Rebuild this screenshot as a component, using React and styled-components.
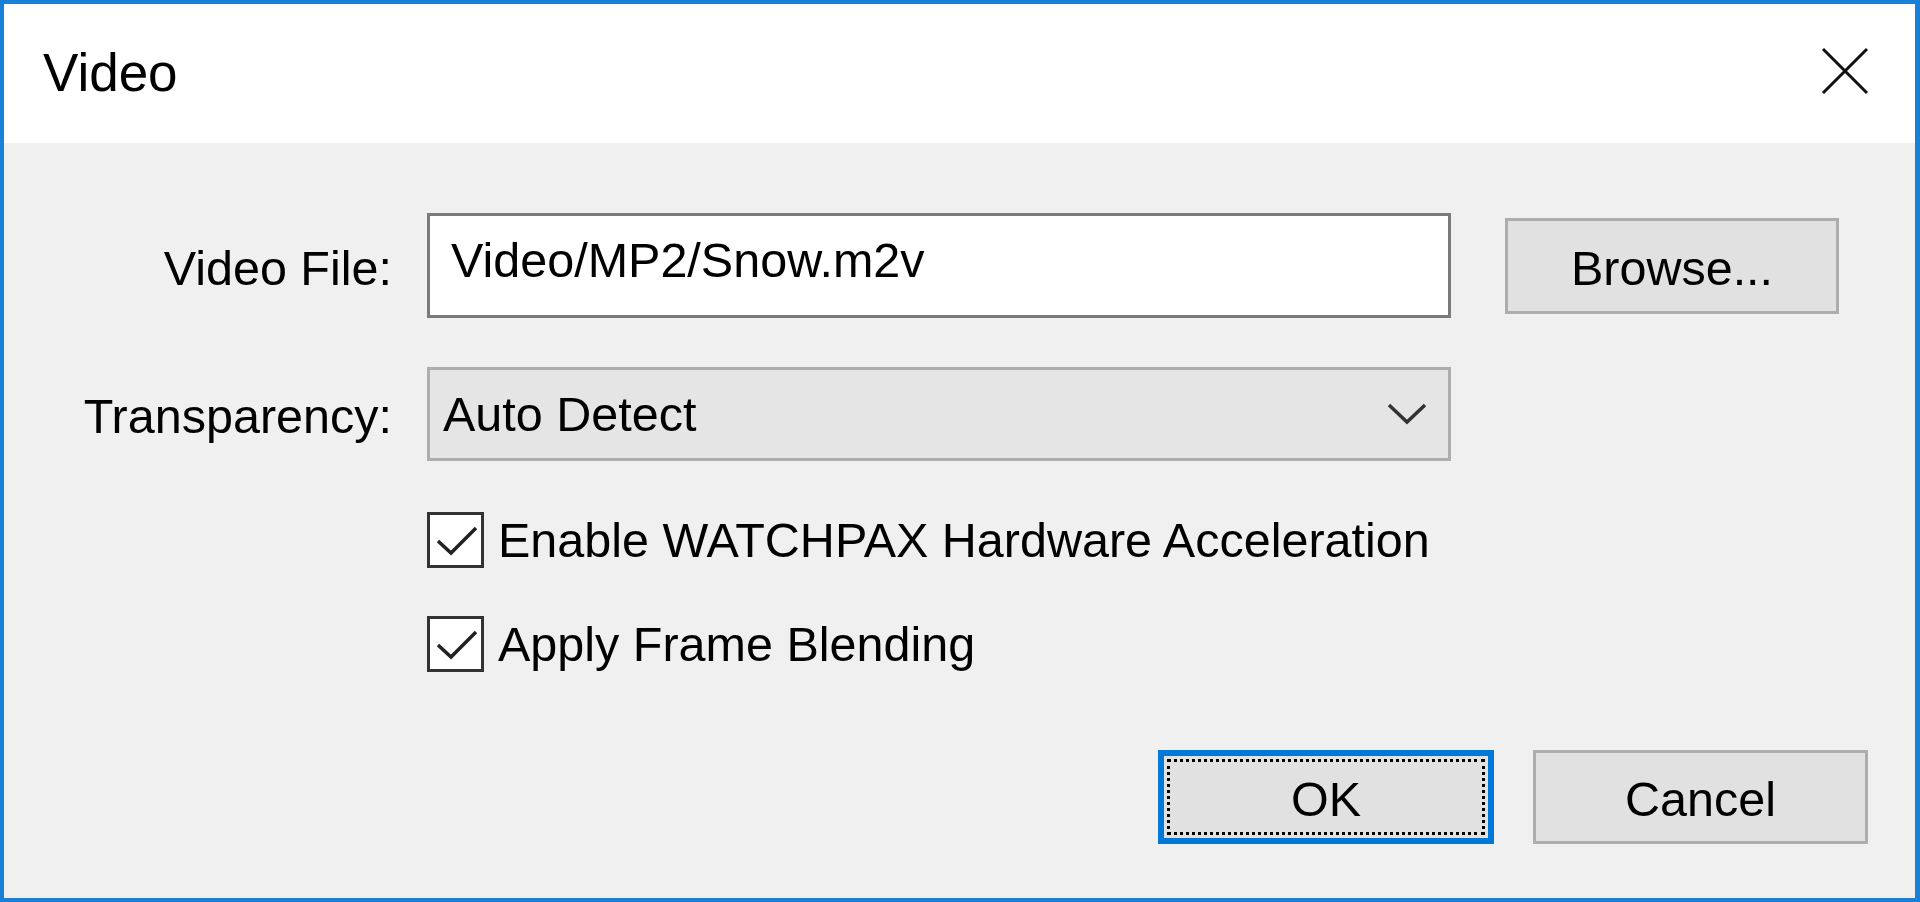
import React, { useState } from "react";
import styled, { createGlobalStyle } from "styled-components";

const GlobalStyle = createGlobalStyle`
  html, body {
    margin: 0;
    padding: 0;
    background: #f0f0f0;
  }
  body {
    font-family: "Liberation Sans", Arial, sans-serif;
    color: #000;
  }
`;

// the dialog fills the whole viewport
const Window = styled.div`
  box-sizing: border-box;
  width: 1920px;
  height: 902px;
  border: 4px solid #1a7fd6;
  border-right-width: 5px;
  display: flex;
  flex-direction: column;
  background: #f0f0f0;
`;

const TitleBar = styled.div`
  height: 139px;
  background: #fff;
  display: flex;
  align-items: center;
  justify-content: space-between;
  padding: 0 45px 0 39px;
  flex-shrink: 0;
`;

const Title = styled.div`
  font-size: 53px;
  padding-bottom: 2px;
`;

const CloseBtn = styled.button`
  width: 50px;
  height: 50px;
  border: none;
  background: transparent;
  padding: 0;
  margin-bottom: 6px;
  cursor: pointer;
  display: flex;
  align-items: center;
  justify-content: center;
`;

const Body = styled.div`
  flex: 1;
  display: flex;
  flex-direction: column;
  padding-top: 70px;
`;

const Row = styled.div`
  display: grid;
  grid-template-columns: 388px 1024px 334px;
  column-gap: 35px;
  align-items: center;
  margin-bottom: ${(p) => p.$gap || 0}px;
`;

const Label = styled.label`
  text-align: right;
  font-size: 48.5px;
  white-space: nowrap;
  padding-top: 4px;
`;

const TextField = styled.input`
  box-sizing: border-box;
  height: 105px;
  width: 100%;
  border: 3px solid #7a7a7a;
  background: #fff;
  padding: 0 0 12px 21px;
  font-family: inherit;
  font-size: 48.5px;
  color: #000;
  outline: none;
`;

const Button = styled.button`
  box-sizing: border-box;
  width: ${(p) => p.$width || 335}px;
  height: ${(p) => p.$height || 94}px;
  margin-left: ${(p) => p.$offset || 0}px;
  border: ${(p) => (p.$default ? "6px solid #0078d7" : "3px solid #adadad")};
  background: #e1e1e1;
  font-family: inherit;
  font-size: 48.5px;
  color: #000;
  position: relative;
  padding: 4px 0 0;
  cursor: pointer;
  outline: none;
`;

// dotted focus rectangle inside the default button
const FocusRing = styled.span`
  position: absolute;
  inset: 3px;
  border: 3px dotted #000;
  pointer-events: none;
`;

const Select = styled.div`
  box-sizing: border-box;
  height: 94px;
  border: 3px solid #adadad;
  background: #e5e5e5;
  display: flex;
  align-items: center;
  justify-content: space-between;
  padding: 0 21px 0 13px;
  font-size: 48.5px;
`;

const CheckRow = styled.label`
  grid-column: 2 / 4;
  display: flex;
  align-items: center;
  gap: 14px;
  font-size: 48.5px;
  white-space: nowrap;
  cursor: pointer;
`;

const Box = styled.span`
  box-sizing: border-box;
  width: 57px;
  height: 56px;
  border: 3px solid #333;
  background: #fff;
  display: flex;
  flex-shrink: 0;
`;

const Actions = styled.div`
  display: flex;
  justify-content: flex-end;
  gap: 39px;
  padding-right: 47px;
`;

const Check = ({ checked, onToggle, children }) => (
  <CheckRow onClick={onToggle}>
    <Box>
      {checked && (
        <svg width="51" height="50" viewBox="0 0 51 50">
          <polyline
            points="8,26 21,38 46,13"
            fill="none"
            stroke="#222"
            strokeWidth="3.5"
            strokeLinejoin="miter"
          />
        </svg>
      )}
    </Box>
    {children}
  </CheckRow>
);

const App = () => {
  const [file, setFile] = useState("Video/MP2/Snow.m2v");
  const [hw, setHw] = useState(true);
  const [blend, setBlend] = useState(true);

  return (
    <>
      <GlobalStyle />
      <Window>
        <TitleBar>
          <Title>Video</Title>
          <CloseBtn aria-label="Close">
            <svg width="48" height="48" viewBox="0 0 48 48">
              <path d="M2 2 L46 46 M46 2 L2 46" stroke="#111" strokeWidth="3" />
            </svg>
          </CloseBtn>
        </TitleBar>
        <Body>
          <Row $gap={49}>
            <Label>Video File:</Label>
            <TextField value={file} onChange={(e) => setFile(e.target.value)} />
            <Button $width={334} $height={96} $offset={19}>
              Browse...
            </Button>
          </Row>
          <Row $gap={51}>
            <Label>Transparency:</Label>
            <Select>
              <span>Auto Detect</span>
              <svg width="40" height="22" viewBox="0 0 40 22">
                <polyline
                  points="2,2 20,19 38,2"
                  fill="none"
                  stroke="#333"
                  strokeWidth="3.5"
                />
              </svg>
            </Select>
          </Row>
          <Row $gap={48}>
            <span />
            <Check checked={hw} onToggle={() => setHw(!hw)}>
              Enable WATCHPAX Hardware Acceleration
            </Check>
          </Row>
          <Row $gap={78}>
            <span />
            <Check checked={blend} onToggle={() => setBlend(!blend)}>
              Apply Frame Blending
            </Check>
          </Row>
          <Actions>
            <Button $width={336} $default>
              <FocusRing />
              OK
            </Button>
            <Button $width={335}>Cancel</Button>
          </Actions>
        </Body>
      </Window>
    </>
  );
};

export default App;
